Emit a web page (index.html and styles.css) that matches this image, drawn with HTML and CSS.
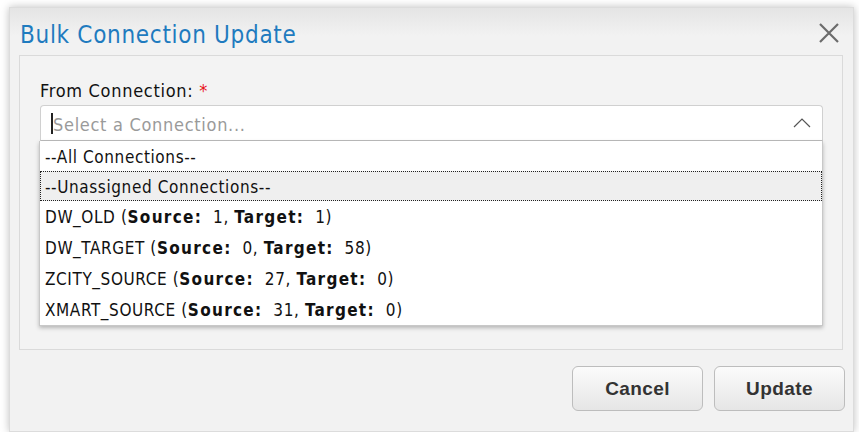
FILE: index.html
```html
<!DOCTYPE html>
<html>
<head>
<meta charset="utf-8">
<link rel="stylesheet" href="styles.css">
</head>
<body>
<div class="dialog">
  <div class="titlebar">
    <div class="title">Bulk Connection Update</div>
    <div class="close" aria-label="Close">
      <svg width="22" height="22" viewBox="0 0 22 22"><path d="M2 2 L20 20 M20 2 L2 20" stroke="#6b6b6b" stroke-width="2.2" fill="none"/></svg>
    </div>
  </div>
  <div class="panel">
    <div class="field-label">From Connection: <span class="req">*</span></div>
    <div class="combo">
      <div class="select">
        <span class="caret"></span><span class="placeholder">Select a Connection...</span>
        <svg class="chev" width="18" height="10" viewBox="0 0 18 10"><path d="M1 9 L9 1 L17 9" stroke="#555" stroke-width="1.2" fill="none"/></svg>
      </div>
      <ul class="list">
        <li>--All Connections--</li>
        <li class="active">--Unassigned Connections--</li>
        <li class="conn">DW_OLD (<b>Source:</b>&nbsp; 1, <b>Target:</b>&nbsp; 1)</li>
        <li class="conn">DW_TARGET (<b>Source:</b>&nbsp; 0, <b>Target:</b>&nbsp; 58)</li>
        <li class="conn">ZCITY_SOURCE (<b>Source:</b>&nbsp; 27, <b>Target:</b>&nbsp; 0)</li>
        <li class="conn">XMART_SOURCE (<b>Source:</b>&nbsp; 31, <b>Target:</b>&nbsp; 0)</li>
      </ul>
    </div>
  </div>
  <div class="footer">
    <button class="btn">Cancel</button>
    <button class="btn">Update</button>
  </div>
</div>
</body>
</html>
```
FILE: styles.css
```css
html, body {
  margin: 0;
  padding: 0;
  background: #ffffff;
}
body {
  padding: 7px 0 0 9px;
  font-family: "DejaVu Sans", sans-serif;
  font-stretch: condensed;
  letter-spacing: 0.7px;
}
.dialog {
  width: 845px;
  height: 425px;
  background: #f2f2f2;
  box-shadow: 0 0 8px rgba(0,0,0,0.25);
  box-sizing: border-box;
  border: 1px solid #dcdcdc;
  display: flex;
  flex-direction: column;
}
.titlebar {
  height: 47px;
  display: flex;
  align-items: center;
  justify-content: space-between;
  padding: 0 13px 0 10px;
  background: linear-gradient(#e4e4e4, #f2f2f2 60%);
}
.title {
  color: #1f7bbf;
  font-size: 24px;
  padding-top: 6px;
}
.close {
  width: 22px;
  height: 22px;
  margin-top: 2px;
}
.close svg { display: block; }
.panel {
  margin: 0 10px 0 9px;
  height: 295px;
  box-sizing: border-box;
  border: 1px solid #dadada;
  background: #f3f3f3;
  padding: 24px 19px 0 20px;
}
.field-label {
  font-size: 18px;
  color: #111;
  line-height: 22px;
  margin-bottom: 3px;
}
.req { color: #e8141a; }
.combo {
  position: relative;
}
.select {
  height: 36px;
  box-sizing: border-box;
  background: #fff;
  border: 1px solid #d0d0d0;
  border-bottom-color: #bcbcbc;
  border-radius: 4px 4px 0 0;
  display: flex;
  align-items: center;
  padding-left: 10px;
  font-size: 18px;
}
.caret {
  display: inline-block;
  width: 2px;
  height: 21px;
  background: #222;
  margin-right: 0;
}
.placeholder { color: #9a9a9a; flex: 1; padding-top: 2px; }
.chev { margin-right: 11px; }
.list {
  position: absolute;
  left: -1px;
  right: 0;
  top: 36px;
  margin: 0;
  padding: 0;
  list-style: none;
  background: #fff;
  border: 1px solid #c8c8c8;
  border-top: none;
  box-shadow: 0 2px 4px rgba(0,0,0,0.25);
  font-size: 17px;
  color: #111;
  letter-spacing: 0.6px;
}
.list li {
  height: 30px;
  line-height: 32px;
  padding-left: 5px;
  box-sizing: border-box;
  white-space: nowrap;
}
.list li.conn {
  height: 31px;
  line-height: 32px;
}
.list li.active {
  background: #efefef;
  border: 1px dotted #222;
  line-height: 30px;
  padding-left: 4px;
}
.list b { font-weight: bold; letter-spacing: 1.3px; }
.footer {
  flex: 1;
  display: flex;
  justify-content: flex-end;
  align-items: flex-start;
  padding: 16px 8px 0 0;
  gap: 11px;
}
.btn {
  width: 131px;
  height: 45px;
  border: 1px solid #bdbdbd;
  border-radius: 6px;
  background: linear-gradient(#fbfbfb, #e6e6e6);
  font-family: "Liberation Sans", Arial, sans-serif;
  font-weight: bold;
  font-size: 19px;
  color: #333;
  letter-spacing: 0.4px;
  padding: 0;
}
```
